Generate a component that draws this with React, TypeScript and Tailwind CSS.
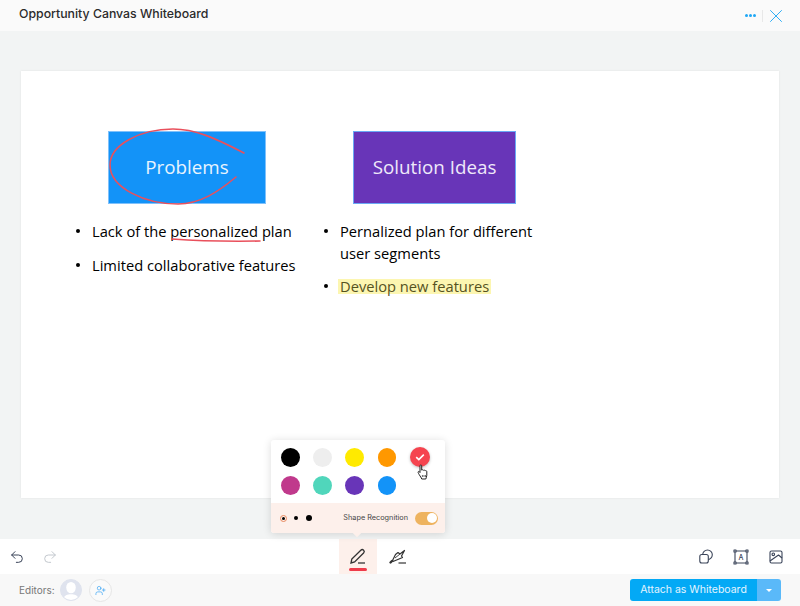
import { Redo2, Undo2, UserPlus, X } from 'lucide-react';

const topColors = ['#000000', '#eeeeee', '#ffea00', '#ff9800'];
const bottomColors = ['#c0398c', '#50d6bb', '#6835b8', '#1393f8'];

function Swatch({ color }: { color: string }) {
  return <div className="h-[18.5px] w-[18.5px] rounded-full" style={{ backgroundColor: color }} />;
}

function ColorPopover() {
  return (
    <div className="absolute left-[271px] top-[440px] z-10 h-[93px] w-[174px] rounded-[3px] bg-white shadow-[0_1px_8px_rgba(0,0,0,0.14)]">
      <div className="relative h-[63px] px-[10px] pt-[8px]">
        <div className="flex h-[18.5px] items-center gap-[13.7px]">
          {topColors.map((c) => (
            <Swatch key={c} color={c} />
          ))}
          <div className="flex h-[20px] w-[20px] items-center justify-center rounded-full bg-[#f5444f] shadow-[0_1px_3px_rgba(0,0,0,0.25)]">
            <svg width="10" height="8" viewBox="0 0 10 8" fill="none">
              <path d="M1.2 4.2 3.8 6.6 8.8 1.6" stroke="white" strokeWidth="1.6" />
            </svg>
          </div>
        </div>
        <div className="mt-[9.5px] flex items-center gap-[13.7px]">
          {bottomColors.map((c) => (
            <Swatch key={c} color={c} />
          ))}
        </div>
        {/* hand cursor */}
        <svg className="absolute left-[146px] top-[24px]" width="13" height="16" viewBox="0 0 13 16" fill="white" stroke="#222" strokeWidth="1">
          <path d="M3 1.8c0-1.1 1.7-1.1 1.7 0v4.3c.5-.5 1.5-.4 1.8.2.5-.4 1.4-.2 1.7.4.6-.3 1.6 0 1.6.9v3.7c0 1.6-.8 2.2-1 3.7H4.7c-.3-1.4-1.4-2.4-2.5-4.4-.8-1.4-1.5-2.5-.9-3 .6-.5 1.2 0 1.7.9V1.8Z" />
          <path d="M5.4 11v2M7 11v2M8.6 11v2" strokeWidth="0.7" />
        </svg>
      </div>
      <div className="flex h-[30px] items-center rounded-b-[3px] bg-[#fdf0eb] pl-[9px] pr-[7px]">
        <div className="flex h-[7px] w-[7px] items-center justify-center rounded-full border border-[#e8875c]">
          <div className="h-[3px] w-[3px] rounded-full bg-black" />
        </div>
        <div className="ml-[6.7px] h-[4px] w-[4px] rounded-full bg-black" />
        <div className="ml-[8px] h-[6px] w-[6px] rounded-full bg-black" />
        <span className="ml-auto font-['Inter',sans-serif] text-[7.3px] text-[#444]">Shape Recognition</span>
        <div className="ml-[7px] flex h-[13px] w-[23px] items-center justify-end rounded-full bg-[#eeb35f] pr-[1px]">
          <div className="h-[10px] w-[10px] rounded-full bg-white" />
        </div>
      </div>
      <div className="absolute bottom-[-3px] left-[83px] h-[6px] w-[6px] rotate-45 bg-[#fdf0eb]" />
    </div>
  );
}

function Bullet() {
  return <span className="mt-[9px] mr-[12px] h-[4px] w-[4px] shrink-0 rounded-full bg-black" />;
}

function Whiteboard() {
  return (
    <div className="relative h-[427px] w-[758px] bg-white font-['Open_Sans',sans-serif] text-[14.7px] text-black shadow-[0_0_2px_rgba(0,0,0,0.08)]">
      <div className="absolute left-[87px] top-[60px] flex h-[73px] w-[158px] items-center justify-center border border-[#7fc1fb] bg-[#1393f8] text-[18.8px] text-[#e8f4fe]">
        Problems
      </div>
      <div className="absolute left-[332px] top-[60px] flex h-[73px] w-[163px] items-center justify-center border border-[#6aa9f5] bg-[#6835b8] text-[18.8px] text-[#efe9fa]">
        Solution Ideas
      </div>

      {/* pen strokes */}
      <svg className="absolute left-[79px] top-[49px] z-10" width="180" height="95" viewBox="0 0 180 95" fill="none">
        <path
          d="M144 33C115 18 95 9 73 9 40 9 10 25 10 45 10 68 45 84 78 84 100 84 118 72 136 57"
          stroke="#e9505c"
          strokeWidth="1.6"
          strokeLinecap="round"
        />
      </svg>
      <svg className="absolute left-[149px] top-[165px] z-10" width="96" height="8" viewBox="0 0 96 8" fill="none">
        <path d="M2 3C30 5 60 5.5 90 5" stroke="#e9505c" strokeWidth="1.6" strokeLinecap="round" />
      </svg>

      <ul className="absolute left-[55px] top-[149px] w-[240px] leading-[22px]">
        <li className="flex">
          <Bullet />
          <span>Lack of the personalized plan</span>
        </li>
        <li className="mt-[12px] flex">
          <Bullet />
          <span>Limited collaborative features</span>
        </li>
      </ul>
      <ul className="absolute left-[303px] top-[149px] w-[230px] leading-[22px]">
        <li className="flex">
          <Bullet />
          <span>Pernalized plan for different user segments</span>
        </li>
        <li className="mt-[11px] flex">
          <Bullet />
          <span className="mt-[3.5px] -ml-[2px] h-[15px] bg-[#fcf6b1] px-[2px] leading-[15px] text-[#55521f]">Develop new features</span>
        </li>
      </ul>
    </div>
  );
}

function ToolIcon({ children }: { children: React.ReactNode }) {
  return (
    <svg width="18" height="18" viewBox="0 0 18 18" fill="none" stroke="#3a4459" strokeWidth="1.1" strokeLinejoin="round">
      {children}
    </svg>
  );
}

export default function App() {
  return (
    <div className="relative flex h-[606px] w-[800px] flex-col overflow-hidden bg-[#f2f4f4] font-['Inter',sans-serif]">
      {/* Header */}
      <header className="flex h-[31px] shrink-0 items-center bg-[#fafafa] pl-[19px] pr-[13.5px]">
        <span className="pb-[3px] text-[12.3px] font-medium text-[#2b2b2b]">Opportunity Canvas Whiteboard</span>
        <div className="ml-auto flex items-center">
          <div className="flex gap-[1px]">
            <div className="h-[3px] w-[3px] rounded-full bg-[#1ea7f5]" />
            <div className="h-[3px] w-[3px] rounded-full bg-[#1ea7f5]" />
            <div className="h-[3px] w-[3px] rounded-full bg-[#1ea7f5]" />
          </div>
          <div className="ml-[6px] h-[12px] w-px bg-[#e8e8e8]" />
          <X size={22} strokeWidth={1} className="ml-[2px] text-[#1ea7f5]" />
        </div>
      </header>

      {/* Canvas */}
      <main className="flex-1 pl-[21px] pt-[40px]">
        <Whiteboard />
      </main>

      <ColorPopover />

      {/* Toolbar */}
      <div className="flex h-[35px] shrink-0 items-center bg-white pl-[9px] pr-[15px]">
        <Undo2 size={16} strokeWidth={1.5} className="text-[#3a4459]" />
        <Redo2 size={16} strokeWidth={1.5} className="ml-[17px] text-[#c3c8ce]" />
        <div className="relative ml-[281px] flex h-[35px] w-[38px] items-center justify-center bg-[#fdf0eb]">
          <svg width="20" height="20" viewBox="0 0 20 20" fill="none" stroke="#333" strokeWidth="1.3">
            <path d="M3 16 3.8 12 12.8 3.2c.8-.8 2-.8 2.8 0s.8 2 0 2.8L6.6 15 3 16Z" />
            <path d="M10 16h7" />
          </svg>
          <div className="absolute bottom-[3.5px] left-[10px] h-[2.5px] w-[18px] rounded-full bg-[#ee3b4a]" />
        </div>
        <div className="ml-[11px]">
          <svg width="20" height="20" viewBox="0 0 20 20" fill="none" stroke="#333" strokeWidth="1.2" strokeLinejoin="round">
            <path d="M4.5 13.5 7.5 7.5 10 5.5 12 7 16.5 3.5 13.5 9 14.5 10.5 11 12 5 14.5Z" />
            <path d="M7 11 12 7" strokeWidth="0.9" />
            <path d="M2.5 15.5 4 14" strokeWidth="2.4" strokeLinecap="round" />
            <path d="M10.5 16h7.5" />
          </svg>
        </div>
        <div className="ml-auto flex items-center gap-[17px]">
          <ToolIcon>
            <circle cx="10.5" cy="6.8" r="4.8" />
            <rect x="2.8" y="6.5" width="8.5" height="8.5" rx="2" fill="white" />
          </ToolIcon>
          <ToolIcon>
            <rect x="3" y="3" width="12" height="12" />
            <rect x="2" y="2" width="2" height="2" fill="white" />
            <rect x="14" y="2" width="2" height="2" fill="white" />
            <rect x="2" y="14" width="2" height="2" fill="white" />
            <rect x="14" y="14" width="2" height="2" fill="white" />
            <text x="9" y="11.8" textAnchor="middle" fontSize="7" fontWeight="500" fill="#3a4459" stroke="none">A</text>
          </ToolIcon>
          <ToolIcon>
            <rect x="3" y="3" width="12" height="12" rx="1.5" />
            <circle cx="6.3" cy="6.3" r="1.3" />
            <path d="M3 13 11.5 7 15 10" />
          </ToolIcon>
        </div>
      </div>

      {/* Footer */}
      <footer className="flex h-[32px] shrink-0 items-center bg-[#f8f8f8] pl-[19px] pr-[19px]">
        <span className="text-[10px] text-[#777]">Editors:</span>
        <div className="ml-[5px] flex h-[22px] w-[22px] items-end justify-center overflow-hidden rounded-full border border-[#dfe3ee] bg-[#dfe3ee]">
          <svg width="20" height="20" viewBox="0 0 21 21" fill="white">
            <ellipse cx="10.5" cy="8" rx="5" ry="6" />
            <path d="M2 21c1-5 5-6 8.5-6s7.5 1 8.5 6Z" />
          </svg>
        </div>
        <div className="ml-[7px] flex h-[23px] w-[23px] items-center justify-center rounded-full border border-[#e6e6e6] bg-[#fafafa]">
          <UserPlus size={11} strokeWidth={1.4} className="text-[#2a9df4]" />
        </div>
        <div className="ml-auto flex h-[22px] overflow-hidden rounded-[3px] text-[10.5px] text-[#e3f4ff]">
          <div className="flex w-[127px] items-center justify-center bg-[#03a9f5]">Attach as Whiteboard</div>
          <div className="flex w-[24px] items-center justify-center bg-[#5ab9f9]">
            <div className="h-0 w-0 border-x-[3.5px] border-t-[3.5px] border-x-transparent border-t-white" />
          </div>
        </div>
      </footer>
    </div>
  );
}
